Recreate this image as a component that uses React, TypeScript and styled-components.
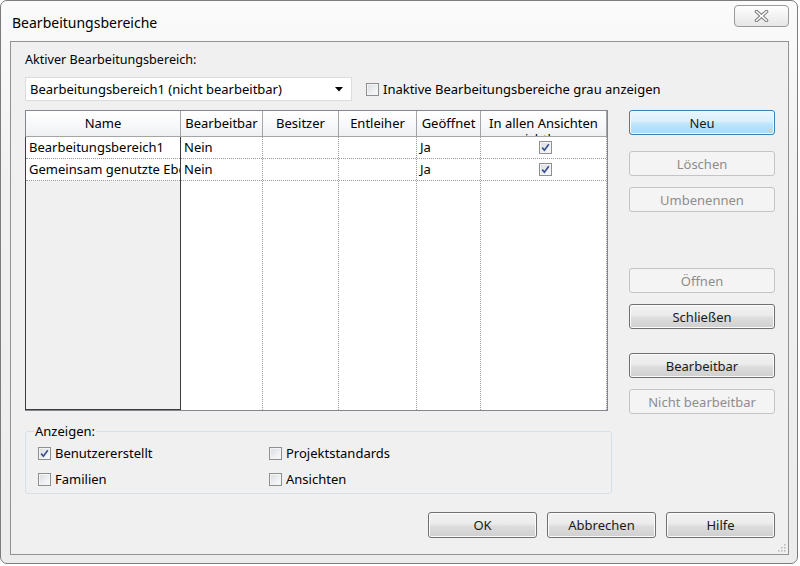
import React from "react";
import styled, { createGlobalStyle, css } from "styled-components";

const GlobalStyle = createGlobalStyle`
  html, body { margin: 0; padding: 0; background: #ffffff; }
  body { font-family: "Noto Sans", "Open Sans", sans-serif; font-size: 13px; color: #000; }
  * { box-sizing: border-box; }
`;

const Window = styled.div`
  width: 798px;
  height: 564px;
  border: 1px solid #7c7c7c;
  border-radius: 7px;
  background: linear-gradient(180deg, #fbfbfb 0%, #f1f1f1 30%, #ececec 100%);
  padding: 0 8px 0 9px;
  display: flex;
  flex-direction: column;
`;

const TitleBar = styled.div`
  height: 40px;
  display: flex;
  justify-content: space-between;
  align-items: flex-start;
`;

const Title = styled.div`
  padding: 13px 0 0 2px;
  font-size: 14px;
  line-height: 18px;
  color: #000;
`;

const CloseButton = styled.div`
  width: 55px;
  height: 22px;
  margin-top: 4px;
  border: 1px solid #9a9a9a;
  border-radius: 4px;
  background: linear-gradient(180deg, #ffffff 0%, #f2f2f2 50%, #e6e6e6 100%);
  display: flex;
  align-items: center;
  justify-content: center;
`;

const Client = styled.div`
  position: relative;
  height: 514px;
  border: 1px solid #929292;
  background: #f0f0f0;
  padding: 10px 13px 0 14px;
  display: flex;
  flex-direction: column;
`;

const Label = styled.div`
  line-height: 16px;
  height: 16px;
  font-size: 12.6px;
`;

const ComboRow = styled.div`
  margin-top: 9px;
  display: flex;
  align-items: center;
`;

const Combo = styled.div`
  width: 327px;
  height: 24px;
  border: 1px solid #dcdcdc;
  background: #ffffff;
  display: flex;
  align-items: center;
  justify-content: space-between;
  padding: 0 8px 0 4px;
  line-height: 22px;
`;

const CheckLabel = styled.label<{ $ml?: number }>`
  display: flex;
  align-items: center;
  gap: 4px;
  margin-left: ${(p) => p.$ml ?? 0}px;
  line-height: 16px;
  white-space: nowrap;
`;

const Box = styled.span`
  width: 13px;
  height: 13px;
  border: 1px solid #8e8f8f;
  background: linear-gradient(135deg, #d8dbe0 0%, #eef0f2 60%, #fbfbfb 100%);
  box-shadow: inset 0 0 0 1px #f4f4f4;
  display: inline-flex;
  align-items: center;
  justify-content: center;
  flex: none;
`;

const MainRow = styled.div`
  margin-top: 9px;
  display: flex;
  gap: 21px;
`;

const Table = styled.div`
  width: 583px;
  height: 301px;
  border: 1px solid #828790;
  background: #ffffff;
  display: flex;
`;

const Column = styled.div<{ $w: number }>`
  width: ${(p) => p.$w}px;
  flex: none;
  display: flex;
  flex-direction: column;
`;

const HeaderCell = styled.div`
  height: 26px;
  padding: 4px 2px 0;
  line-height: 16px;
  text-align: center;
  overflow: hidden;
  background: linear-gradient(180deg, #ffffff 0%, #f7f8f9 60%, #eef0f2 100%);
  border-right: 1px solid #a5a5a5;
  border-bottom: 1px solid #a5a5a5;
`;

const ColBody = styled.div<{ $rowHeader?: boolean }>`
  flex: 1;
  display: flex;
  flex-direction: column;
  ${(p) =>
    p.$rowHeader
      ? css`
          background: #f0f0f0;
          border-right: 1px solid #3c3c3c;
          border-bottom: 1px solid #3c3c3c;
          border-left: 1px solid #3c3c3c;
          margin-left: -1px;
        `
      : css`
          border-right: 1px dotted #9a9a9a;
        `}
`;

const Cell = styled.div<{ $center?: boolean }>`
  height: 22px;
  line-height: 21px;
  padding-left: 3px;
  background: #ffffff;
  border-bottom: 1px dotted #9a9a9a;
  white-space: nowrap;
  overflow: hidden;
  display: flex;
  align-items: center;
  justify-content: ${(p) => (p.$center ? "center" : "flex-start")};
`;

const ButtonColumn = styled.div`
  width: 146px;
  display: flex;
  flex-direction: column;
`;

type Variant = "normal" | "focused" | "disabled";

const Button = styled.button<{ $variant?: Variant; $mt?: number; $w?: number; $h?: number }>`
  width: ${(p) => p.$w ?? 146}px;
  height: ${(p) => p.$h ?? 25}px;
  margin-top: ${(p) => p.$mt ?? 0}px;
  font-family: inherit;
  font-size: 13px;
  font-weight: 400;
  border-radius: 3px;
  padding: 0;
  line-height: 16px;
  ${(p) =>
    p.$variant === "focused"
      ? css`
          border: 1px solid #3c7fb1;
          background: linear-gradient(180deg, #eaf6fd 0%, #d9f0fc 45%, #bee6fd 55%, #a7d9f5 100%);
          color: #1a1a1a;
          box-shadow: inset 0 0 0 1px #f4fbff;
        `
      : p.$variant === "disabled"
      ? css`
          border: 1px solid #c2c5c8;
          background: #f4f4f4;
          color: #8d8d8d;
        `
      : css`
          border: 1px solid #707070;
          background: linear-gradient(180deg, #f2f2f2 0%, #ebebeb 45%, #dddddd 55%, #cfcfcf 100%);
          color: #1a1a1a;
          box-shadow: inset 0 0 0 1px #fbfbfb;
        `}
`;

const Group = styled.fieldset`
  margin: 9px 0 0;
  width: 587px;
  border: 1px solid #d5dfe5;
  border-radius: 3px;
  padding: 4px 0 4px 12px;
  min-width: 0;
`;

const Legend = styled.legend`
  margin-left: -4px;
  padding: 0 1px;
  line-height: 16px;
`;

const GroupGrid = styled.div`
  display: grid;
  grid-template-columns: 231px 1fr;
  grid-auto-rows: 20px;
  row-gap: 6px;
`;

const Footer = styled.div`
  margin-top: 18px;
  display: flex;
  justify-content: flex-end;
  gap: 10px;
`;

const Grip = styled.svg`
  position: absolute;
  right: 2px;
  bottom: 2px;
`;

const Check = () => (
  <svg width="9" height="9" viewBox="0 0 9 9">
    <path d="M1.2 4.6 L3.4 7.2 L7.8 1.2" fill="none" stroke="#3b4f8e" strokeWidth="1.7" />
  </svg>
);

const CheckBox: React.FC<{ checked?: boolean }> = ({ checked }) => <Box>{checked ? <Check /> : null}</Box>;

const columns = [
  { name: "Name", w: 155 },
  { name: "Bearbeitbar", w: 82 },
  { name: "Besitzer", w: 76 },
  { name: "Entleiher", w: 78 },
  { name: "Geöffnet", w: 64 },
  { name: "In allen Ansichten sichtbar", w: 126 },
];

const rows = [
  ["Bearbeitungsbereich1", "Nein", "", "", "Ja", "x"],
  ["Gemeinsam genutzte Ebenen", "Nein", "", "", "Ja", "x"],
];

export default function App() {
  return (
    <>
      <GlobalStyle />
      <Window>
        <TitleBar>
          <Title>Bearbeitungsbereiche</Title>
          <CloseButton>
            <svg width="15" height="12" viewBox="0 0 15 12">
              <path d="M2.5 1.5 L12.5 10.5 M12.5 1.5 L2.5 10.5" stroke="#7a7a7a" strokeWidth="3.6" strokeLinecap="round" />
              <path d="M2.5 1.5 L12.5 10.5 M12.5 1.5 L2.5 10.5" stroke="#ffffff" strokeWidth="1.6" strokeLinecap="round" />
            </svg>
          </CloseButton>
        </TitleBar>
        <Client>
          <Label>Aktiver Bearbeitungsbereich:</Label>
          <ComboRow>
            <Combo>
              <span>Bearbeitungsbereich1 (nicht bearbeitbar)</span>
              <svg width="8" height="5" viewBox="0 0 8 5">
                <path d="M0 0 H8 L4 4.5 Z" fill="#000" />
              </svg>
            </Combo>
            <CheckLabel $ml={14}>
              <CheckBox />
              Inaktive Bearbeitungsbereiche grau anzeigen
            </CheckLabel>
          </ComboRow>
          <MainRow>
            <Table>
              {columns.map((c, ci) => (
                <Column key={c.name} $w={c.w}>
                  <HeaderCell>{c.name}</HeaderCell>
                  <ColBody $rowHeader={ci === 0}>
                    {rows.map((r, ri) => (
                      <Cell key={ri} $center={ci === 5}>
                        {ci === 5 ? <CheckBox checked /> : r[ci]}
                      </Cell>
                    ))}
                  </ColBody>
                </Column>
              ))}
            </Table>
            <ButtonColumn>
              <Button $variant="focused">Neu</Button>
              <Button $variant="disabled" $mt={16}>Löschen</Button>
              <Button $variant="disabled" $mt={11}>Umbenennen</Button>
              <Button $variant="disabled" $mt={56}>Öffnen</Button>
              <Button $mt={11}>Schließen</Button>
              <Button $mt={24}>Bearbeitbar</Button>
              <Button $variant="disabled" $mt={11}>Nicht bearbeitbar</Button>
            </ButtonColumn>
          </MainRow>
          <Group>
            <Legend>Anzeigen:</Legend>
            <GroupGrid>
              <CheckLabel>
                <CheckBox checked />
                Benutzererstellt
              </CheckLabel>
              <CheckLabel>
                <CheckBox />
                Projektstandards
              </CheckLabel>
              <CheckLabel>
                <CheckBox />
                Familien
              </CheckLabel>
              <CheckLabel>
                <CheckBox />
                Ansichten
              </CheckLabel>
            </GroupGrid>
          </Group>
          <Footer>
            <Button $w={109} $h={26}>OK</Button>
            <Button $w={109} $h={26}>Abbrechen</Button>
            <Button $w={109} $h={26}>Hilfe</Button>
          </Footer>
          <Grip width="10" height="10" viewBox="0 0 10 10">
            {[
              [8, 2],
              [5, 5],
              [8, 5],
              [2, 8],
              [5, 8],
              [8, 8],
            ].map(([x, y]) => (
              <rect key={`${x}-${y}`} x={x} y={y} width="1.5" height="1.5" fill="#b8b8b8" />
            ))}
          </Grip>
        </Client>
      </Window>
    </>
  );
}
